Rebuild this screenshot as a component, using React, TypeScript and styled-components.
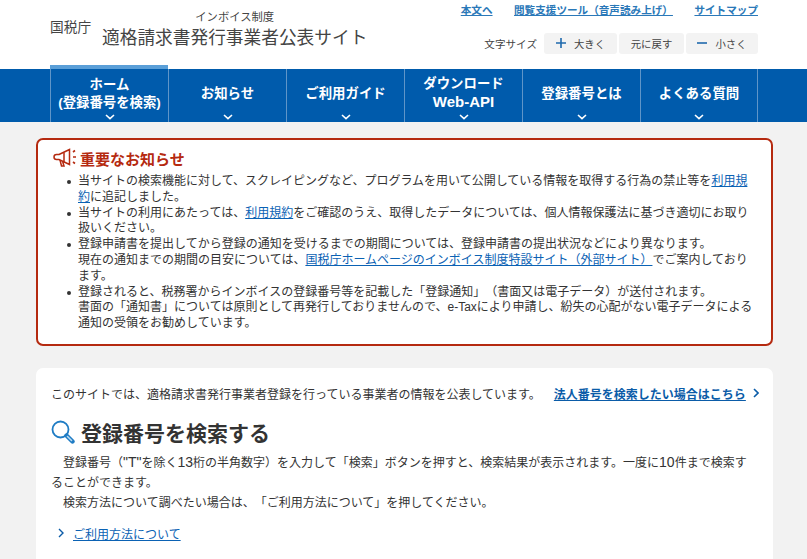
import React from "react";
import styled, { createGlobalStyle } from "styled-components";

const Global = createGlobalStyle`
  html, body { margin: 0; padding: 0; height: 559px; overflow: hidden; background: #f2f2f2; }
  body { font-family: "Liberation Sans", "Noto Sans CJK JP", sans-serif; color: #333; text-spacing-trim: space-all; }
  * { box-sizing: border-box; }
`;
const Header = styled.header`
  height: 69px; background: #fff; display: flex; justify-content: space-between; padding: 0 49px 0 50px;
`;
const Brand = styled.div`display: flex; align-items: flex-start;`;
const Agency = styled.div`font-size: 13.7px; line-height: 20px; color: #444; margin-top: 18px; width: 52px; white-space: nowrap;`;
const Title = styled.div`display: flex; flex-direction: column; align-items: center; color: #444;`;
const Sub = styled.div`font-size: 11.3px; line-height: 16px; margin-top: 9px;`;
const Main = styled.div`font-size: 17.7px; line-height: 26px; white-space: nowrap;`;
const Utility = styled.div`display: flex; flex-direction: column; align-items: flex-end;`;
const TopLinks = styled.nav`display: flex; gap: 21.5px; margin-top: 2px; height: 17px;`;
const TopLink = styled.a`font-size: 10.6px; line-height: 17px; font-weight: 700; color: #2a78b8; text-decoration: underline;`;
const SizeRow = styled.div`display: flex; align-items: center; gap: 2px; margin-top: 14px;`;
const SizeLabel = styled.span`font-size: 10.6px; color: #444; margin-right: 5px;`;
const SizeButton = styled.button<{ $w: number }>`
  width: ${(p) => p.$w}px; height: 21px; border: 0; border-radius: 3px; background: #f3f3f3; color: #444;
  display: flex; align-items: center; justify-content: center; gap: 8px; padding: 0 0 1px;
  font-family: inherit; font-size: 10.4px;
`;
const Nav = styled.nav`
  height: 53px; background: #005bac; display: flex; padding-left: 50px;
`;
const NavItem = styled.a<{ $active?: boolean }>`
  position: relative; width: 118px; height: 53px; border-left: 1px solid #5f95c8; color: #fff;
  display: flex; align-items: center; justify-content: center; text-align: center;
  font-size: 13.4px; line-height: 18px; font-weight: 700; padding-bottom: 4px;
  &:last-child { border-right: 1px solid #5f95c8; }
  ${(p) => p.$active && `&::before { content: ""; position: absolute; left: -1px; right: 0; top: -4px; height: 4px; background: #5a9fd8; }`}
`;
const NavLatin = styled.span`font-size: 15px;`;
const Chevron = styled.svg`position: absolute; left: 50%; bottom: 2px; margin-left: -5px;`;
const Content = styled.main`padding: 16px 34px 0 36px;`;
const Notice = styled.section`
  height: 208px; background: #fff; border: 2px solid #b52a10; border-radius: 7px; padding: 7px 14px 0 15px;
`;
const NoticeHead = styled.h2`
  display: flex; align-items: center; gap: 2px; margin: 0; height: 22px; color: #b52a10; font-size: 15px; font-weight: 700;
`;
const List = styled.ul`margin: 5px 0 0; padding: 0 0 0 25px; list-style: none;`;
const Item = styled.li`
  position: relative; font-size: 12px; line-height: 15.8px; color: #333;
  &::before { content: ""; position: absolute; left: -11px; top: 6px; width: 4px; height: 4px; border-radius: 50%; background: #333; }
`;
const Link = styled.a`color: #0b62b4; text-decoration: underline;`;
const Card = styled.section`
  margin-top: 22px; height: 191px; background: #fff; border-radius: 7px 7px 0 0; padding: 16px 15px 0;
`;
const IntroRow = styled.div`display: flex; align-items: center; height: 18px; font-size: 12px; color: #333; white-space: nowrap;`;
const IntroLink = styled.a`margin-left: 13px; color: #0b5ca8; font-weight: 700; text-decoration: underline;`;
const Caret = styled.svg`margin-left: 7px; flex: none;`;
const Heading = styled.h1`
  display: flex; align-items: center; gap: 6px; margin: 15px 0 0; height: 30px; font-size: 21px; font-weight: 700; color: #333;
`;
const Para = styled.p`margin: 6px 0 0; font-size: 12px; line-height: 20.2px; color: #333;`;
const ParaLatin = styled.span`font-size: 14px; line-height: 1;`;
const Indent = styled.span`display: inline-block; width: 12px;`;
const UsageRow = styled.div`display: flex; align-items: center; gap: 9px; margin: 11px 0 0 7px; font-size: 12px;`;

const Down = () => (
  <Chevron width="10" height="6" viewBox="0 0 10 6" fill="none" stroke="#fff" strokeWidth="1.6"><path d="M1 1l4 3.6L9 1" /></Chevron>
);

const items: React.ReactNode[][] = [
  ["ホーム", "(登録番号を検索)"], ["お知らせ"], ["ご利用ガイド"], ["ダウンロード", <NavLatin>Web-API</NavLatin>], ["登録番号とは"], ["よくある質問"],
];

export default function App() {
  return (
    <>
      <Global />
      <Header>
        <Brand>
          <Agency>国税庁</Agency>
          <Title>
            <Sub>インボイス制度</Sub>
            <Main>適格請求書発行事業者公表サイト</Main>
          </Title>
        </Brand>
        <Utility>
          <TopLinks>
            <TopLink>本文へ</TopLink>
            <TopLink>閲覧支援ツール（音声読み上げ）</TopLink>
            <TopLink>サイトマップ</TopLink>
          </TopLinks>
          <SizeRow>
            <SizeLabel>文字サイズ</SizeLabel>
            <SizeButton $w={73}>
              <svg width="10" height="10" viewBox="0 0 10 10" stroke="#1f69ad" strokeWidth="1.6"><path d="M0 5h10M5 0v10" /></svg>
              大きく
            </SizeButton>
            <SizeButton $w={65}>元に戻す</SizeButton>
            <SizeButton $w={72}>
              <svg width="10" height="10" viewBox="0 0 10 10" stroke="#1f69ad" strokeWidth="1.6"><path d="M0 5h10" /></svg>
              小さく
            </SizeButton>
          </SizeRow>
        </Utility>
      </Header>
      <Nav>
        {items.map((lines, i) => (
          <NavItem key={i} $active={i === 0}>
            <span>{lines.map((l, j) => <React.Fragment key={j}>{j > 0 && <br />}{l}</React.Fragment>)}</span>
            <Down />
          </NavItem>
        ))}
      </Nav>
      <Content>
        <Notice>
          <NoticeHead>
            <svg width="25" height="20" viewBox="0 0 25 20" fill="none" stroke="#b52a10" strokeWidth="1.5">
              <path d="M6 6.5L16.5 1.5v15L6 11.5H3.5a2.5 2.5 0 0 1 0-5z" />
              <path d="M7 12l1.5 6h2.5l-1.5-5M11 4.5v10" />
              <path d="M20 4l2-1.5M20 9h3M20 14l2 1.5" strokeWidth="1.6" />
            </svg>
            重要なお知らせ
          </NoticeHead>
          <List>
            <Item>当サイトの検索機能に対して、スクレイピングなど、プログラムを用いて公開している情報を取得する行為の禁止等を<Link>利用規約</Link>に追記しました。</Item>
            <Item>当サイトの利用にあたっては、<Link>利用規約</Link>をご確認のうえ、取得したデータについては、個人情報保護法に基づき適切にお取り扱いください。</Item>
            <Item>登録申請書を提出してから登録の通知を受けるまでの期間については、登録申請書の提出状況などにより異なります。<br />現在の通知までの期間の目安については、<Link>国税庁ホームページのインボイス制度特設サイト（外部サイト）</Link>でご案内しております。</Item>
            <Item>登録されると、税務署からインボイスの登録番号等を記載した「登録通知」（書面又は電子データ）が送付されます。<br />書面の「通知書」については原則として再発行しておりませんので、e-Taxにより申請し、紛失の心配がない電子データによる通知の受領をお勧めしています。</Item>
          </List>
        </Notice>
        <Card>
          <IntroRow>
            このサイトでは、適格請求書発行事業者登録を行っている事業者の情報を公表しています。
            <IntroLink>法人番号を検索したい場合はこちら</IntroLink>
            <Caret width="6" height="10" viewBox="0 0 6 10" fill="none" stroke="#0b5ca8" strokeWidth="1.6"><path d="M1 1l4 4-4 4" /></Caret>
          </IntroRow>
          <Heading>
            <svg width="24" height="24" viewBox="0 0 24 24" fill="none">
              <circle cx="9.5" cy="9.5" r="8" strokeWidth="1.8" stroke="#1f7cc4" />
              <path d="M15.5 15.5l6 6" strokeWidth="4.4" strokeLinecap="round" stroke="#1f7cc4" />
              <path d="M16.5 16.5l4 4" strokeWidth="1.6" strokeLinecap="round" stroke="#bcdcf2" />
            </svg>
            登録番号を検索する
          </Heading>
          <Para>
            <Indent />登録番号（<ParaLatin>"T"</ParaLatin>を除く<ParaLatin>13</ParaLatin>桁の半角数字）を入力して「検索」ボタンを押すと、検索結果が表示されます。一度に<ParaLatin>10</ParaLatin>件まで検索することができます。<br />
            <Indent />検索方法について調べたい場合は、「ご利用方法について」を押してください。
          </Para>
          <UsageRow>
            <svg width="6" height="10" viewBox="0 0 6 10" fill="none" stroke="#0b5ca8" strokeWidth="1.4"><path d="M1 1l4 4-4 4" /></svg>
            <Link>ご利用方法について</Link>
          </UsageRow>
        </Card>
      </Content>
    </>
  );
}
